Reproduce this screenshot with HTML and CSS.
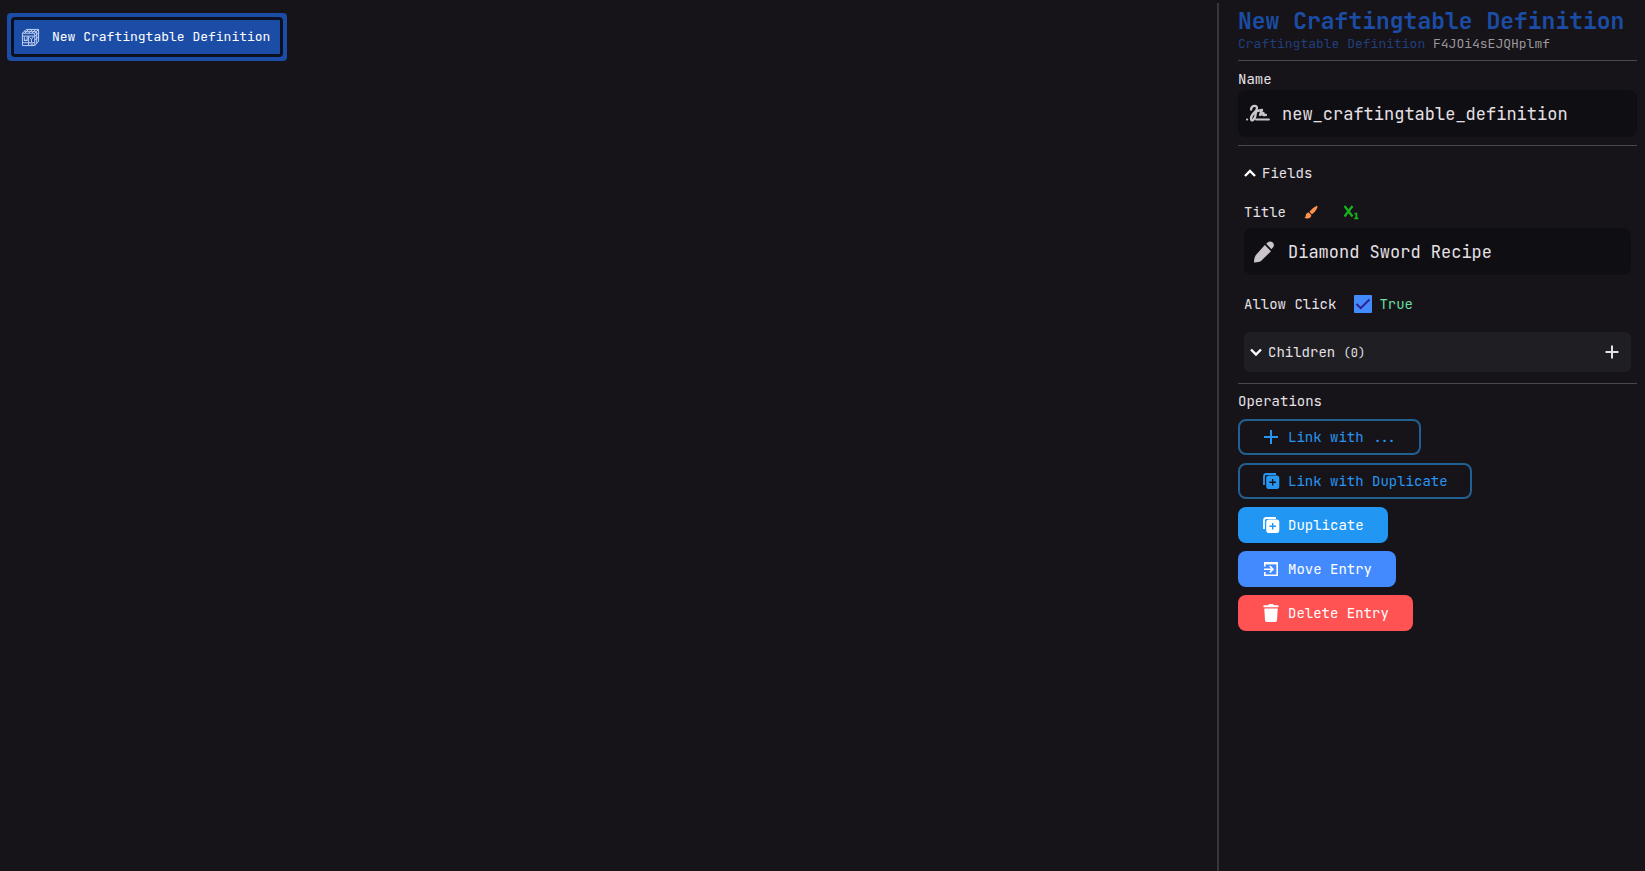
FILE: index.html
```html
<!DOCTYPE html>
<html lang="en">
<head>
<meta charset="utf-8">
<title>New Craftingtable Definition</title>
<link rel="stylesheet" href="styles.css">
</head>
<body>
<div class="app">
  <main class="graph">
    <button class="node" type="button">
      <span class="node-body">
        <svg class="node-icon" viewBox="0 0 20 20" fill="none" stroke="currentColor" stroke-width="1">
          <path d="M1.5 5.500h13v13h-13zM1.500 5.500l4-4h13l-4 4M18.500 1.500v12.500l-4 4.500M1.500 8.500h13M4 5.500l4-4M8 5.500l4-4M11.500 5.500l4-4M3.500 3.500h13M16.500 3.500v12.500M14.500 9l4-4M14.500 13l4-4M8 8.500v10M1.500 15.500h13M3.500 9v4h3v-4M9 10l2 2 2-3M11 12v3M3 13h4M10 17h3"/>
        </svg>
        <span>New Craftingtable Definition</span>
      </span>
    </button>
  </main>
  <aside class="inspector">
    <header class="head">
      <h1 class="title">New Craftingtable Definition</h1>
      <p class="subtitle"><span class="kind">Craftingtable Definition</span> F4JOi4sEJQHplmf</p>
    </header>
    <section class="section">
      <label class="label name-label" for="name">Name</label>
      <div class="field">
        <svg class="field-icon" viewBox="0 0 24 24" fill="none" stroke="currentColor" stroke-width="2.300" stroke-linecap="round" stroke-linejoin="round">
          <path d="M5 7.500c.5-4 6-5 6-1.500 0 4-6 5.500-6 10.500 0 4 4 1 4.500-3 .3-2.500 0-3.500 1.500-4.500M11 9l5-1-2 5 3.500-2-.3 2H20"/><path d="M10 17.500H23" stroke-width="1.800"/><path d="M1 17.500h.2" stroke-width="2"/>
        </svg>
        <input id="name" class="input" type="text" value="new_craftingtable_definition">
      </div>
    </section>
    <section class="section fields">
      <button class="toggle" type="button">
        <svg class="chevron" viewBox="0 0 12 12" fill="none" stroke="currentColor" stroke-width="2.400"><path d="M1 9l5-5 5 5"/></svg>
        <span>Fields</span>
      </button>
      <div class="title-row">
        <label class="label" for="title">Title</label>
        <button class="mini brush" type="button" aria-label="Colors">
          <svg viewBox="0 0 16 16" fill="currentColor"><path d="M14.500.8c1 .2 1.100 1.200.7 2.200-1.500 3-3.500 5.700-6.200 7.700L6.200 7.800C8.500 5 11.500 2.200 14.500.8zM5.500 8.500l2.800 2.900c.3 2.300-1.800 4-4.300 4-1.500 0-2.800-.4-3.500-1.100 1.500-.3 1.300-1.200 1.600-2.800.3-1.800 1.700-3 3.400-3z"/></svg>
        </button>
        <button class="mini subscript" type="button" aria-label="Placeholder">
          <svg viewBox="0 0 16 16" fill="none" stroke="currentColor"><path d="M1.500 2l8 10.500M9.500 2l-8 10.500" stroke-width="2.200"/><path d="M11.500 9.500h1.900v4.800M11.300 14.300h4" stroke-width="1.700"/></svg>
        </button>
      </div>
      <div class="field">
        <svg class="field-icon" viewBox="0 0 24 24" fill="currentColor"><path d="M12.800 5l6.200 6.200L9 21c-1.800 1.200-4.500 1.500-7 1.400 0-2.300.4-5.200 1.700-7.200zM14.200 3.800l1.700-1.500c1.300-1.300 3.500-1.100 4.800.2s1.700 3.500.4 4.800l-1.600 1.900z"/></svg>
        <input id="title" class="input" type="text" value="Diamond Sword Recipe">
      </div>
      <div class="check-row">
        <label class="label" for="click">Allow Click</label>
        <span class="check-wrap">
          <input id="click" class="check" type="checkbox" checked>
          <svg class="tick" viewBox="0 0 18 18" fill="none" stroke="currentColor" stroke-width="2"><path d="M2.500 9l4.200 4.200L15.500 4.500"/></svg>
        </span>
        <label class="true" for="click">True</label>
      </div>
      <div class="children">
        <button class="toggle" type="button">
          <svg class="chevron" viewBox="0 0 12 12" fill="none" stroke="currentColor" stroke-width="2.400"><path d="M1 3.500l5 5 5-5"/></svg>
          <span>Children <small class="count">(0)</small></span>
        </button>
        <button class="add" type="button" aria-label="Add child">
          <svg viewBox="0 0 14 14" fill="none" stroke="currentColor" stroke-width="2"><path d="M7 .5v13M.5 7h13"/></svg>
        </button>
      </div>
    </section>
    <section class="section operations">
      <h2 class="label">Operations</h2>
      <button class="btn outline" type="button">
        <svg viewBox="0 0 18 18" fill="none" stroke="currentColor" stroke-width="2"><path d="M9 2v14M2 9h14"/></svg>Link with ...
      </button>
      <button class="btn outline" type="button">
        <svg viewBox="0 0 18 18" fill="currentColor" fill-rule="evenodd"><path d="M7 3.500h7.500A2.800 2.800 0 0 1 17.300 6.300v8a2.800 2.800 0 0 1-2.800 2.800H7a2.800 2.800 0 0 1-2.800-2.800v-8A2.800 2.800 0 0 1 7 3.500zM10 7v2.600H7.400v1.400H10v2.600h1.400V11H14V9.600h-2.600V7z"/><path d="M2 13V4.500A2.500 2.500 0 0 1 4.500 2H14" fill="none" stroke="currentColor" stroke-width="1.800"/></svg>Link with Duplicate
      </button>
      <button class="btn duplicate" type="button">
        <svg viewBox="0 0 18 18" fill="currentColor" fill-rule="evenodd"><path d="M7 3.500h7.500A2.800 2.800 0 0 1 17.300 6.300v8a2.800 2.800 0 0 1-2.800 2.800H7a2.800 2.800 0 0 1-2.800-2.800v-8A2.800 2.800 0 0 1 7 3.500zM10 7v2.600H7.400v1.400H10v2.600h1.400V11H14V9.600h-2.600V7z"/><path d="M2 13V4.500A2.500 2.500 0 0 1 4.500 2H14" fill="none" stroke="currentColor" stroke-width="1.800"/></svg>Duplicate
      </button>
      <button class="btn move" type="button">
        <svg viewBox="0 0 18 18" fill="none" stroke="currentColor" stroke-width="1.600"><path d="M2.800 6.500V3.200h12.400v12H2.800v-3.300M2 9.200h8.500M7.800 6l3.200 3.200-3.200 3.200"/><path d="M2 3.200h14" stroke-width="2.400"/></svg>Move Entry
      </button>
      <button class="btn delete" type="button">
        <svg viewBox="0 0 18 18" fill="currentColor"><path d="M1.500 1.300h4.700L7 0h4l.8 1.300h4.700v1.900h-15zM2.300 4.500h13.400l-.7 12A1.600 1.600 0 0 1 13.400 18H4.600A1.600 1.600 0 0 1 3 16.500z"/></svg>Delete Entry
      </button>
    </section>
  </aside>
</div>
</body>
</html>
```
FILE: styles.css
```css
* { box-sizing: border-box; }

body {
  margin: 0;
  background: #161419;
  color: #e6e1e6;
  font: 14px/20px "JetBrains Mono", "DejaVu Sans Mono", monospace;
}

h1, h2, p { margin: 0; font-weight: 400; }

button, input { font: inherit; color: inherit; }

button {
  display: flex;
  align-items: center;
  margin: 0;
  padding: 0;
  border: 0;
  background: none;
  cursor: pointer;
}

svg { display: block; flex: none; }

.app {
  display: flex;
  min-height: 100vh;
  padding-top: 3px;
}

.graph { flex: 1; padding: 10px 7px; }

.node {
  padding: 4px;
  border-radius: 4px;
  background: #1c4da6;
  color: #fff;
  font-size: 13px;
}

.node-body {
  display: flex;
  align-items: center;
  gap: 12px;
  height: 40px;
  padding: 0 10px 0 7px;
  border: 3px solid #0d1020;
  border-radius: 4px;
}

.node-icon { width: 19px; height: 19px; color: #c8d6f2; }

.inspector {
  width: 428px;
  padding: 0 8px 0 19px;
  border-left: 2px solid #363539;
}

.head { padding: 4px 0 7px; }

.title {
  color: #1c4da6;
  font-size: 23px;
  line-height: 28px;
  font-weight: 700;
  white-space: nowrap;
}

.subtitle { color: #9b999d; font-size: 13px; line-height: 18px; }
.kind { color: #213f7c; }

.section { border-top: 1px solid #48474c; padding: 8px 0; }

.label { display: block; font-size: 14px; line-height: 20px; }
.name-label { margin-bottom: 1px; }

.field {
  display: flex;
  align-items: center;
  gap: 12px;
  height: 47px;
  padding: 0 8px;
  border-radius: 8px;
  background: #0f0e13;
}

.field-icon { width: 24px; height: 24px; color: #c9c5ca; }

.input {
  flex: 1;
  min-width: 0;
  padding: 0;
  border: 0;
  outline: 0;
  background: none;
  font-size: 17px;
  line-height: 24px;
}

.fields { padding: 16px 6px 11px; }

.toggle { gap: 6px; height: 22px; }
.chevron { width: 12px; height: 12px; color: #fff; }

.title-row { display: flex; align-items: center; padding: 18px 0 6px; }

.mini { margin-left: 18px; }
.mini svg { width: 14px; height: 14px; }
.brush { color: #ff924b; }
.subscript { margin-left: 25px; color: #16b51b; }
.subscript svg { width: 16px; height: 16px; }

.check-row { display: flex; align-items: center; padding: 19px 0 18px; }

.check-wrap { position: relative; margin: 0 7px 0 18px; }

.check {
  display: block;
  width: 18px;
  height: 18px;
  margin: 0;
  border-radius: 1px;
  appearance: none;
  background: #448aff;
}

.tick {
  position: absolute;
  inset: 0;
  color: #30218c;
  pointer-events: none;
}

.true { color: #69dfa4; }

.children {
  display: flex;
  align-items: center;
  justify-content: space-between;
  height: 40px;
  padding: 0 12px 0 6px;
  border-radius: 6px;
  background: #1f1e23;
}

.count { font-size: 12px; }
.add svg { width: 14px; height: 14px; }

.operations {
  display: flex;
  flex-direction: column;
  align-items: flex-start;
  gap: 8px;
  padding-top: 7px;
}

.btn {
  gap: 8px;
  height: 36px;
  padding: 0 24px;
  border-radius: 8px;
  color: #fff;
}

.btn svg { width: 18px; height: 18px; }

.outline {
  padding: 0 22px;
  border: 2px solid #225f92;
  color: #2796f3;
}

.duplicate { background: #2196f3; }
.move { background: #448aff; }
.delete { background: #ff5252; }
```
